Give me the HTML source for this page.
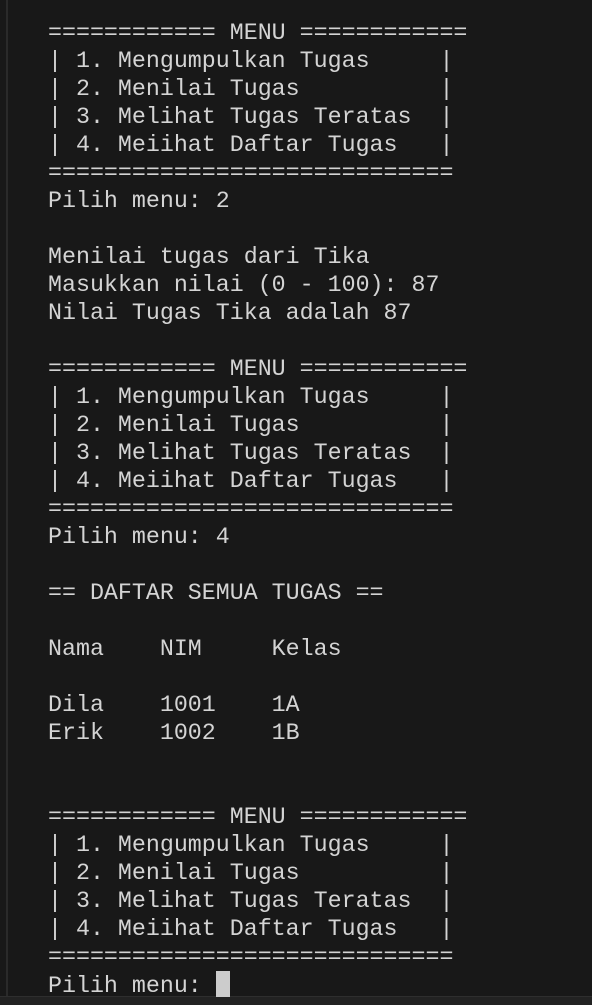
<!DOCTYPE html>
<html><head><meta charset="utf-8"><style>
html,body{margin:0;padding:0;background:#181818;width:592px;height:1004px;overflow:hidden;}
.bl{position:absolute;left:6px;top:0;width:2px;height:997px;background:#2a2a2a;}
.bb{position:absolute;left:0;top:996px;width:592px;height:8px;background:#222;border-top:1px solid #2e2e2e;}
pre{position:absolute;left:48px;top:19px;margin:0;font-family:"Liberation Mono","DejaVu Sans Mono",monospace;font-size:23.3px;line-height:28px;color:#d4d4d4;}
.cur{display:inline-block;width:14px;height:26px;background:#cccccc;vertical-align:-5px;}
</style></head><body>
<div class="bl"></div><div class="bb"></div>
<pre>============ MENU ============
| 1. Mengumpulkan Tugas     |
| 2. Menilai Tugas          |
| 3. Melihat Tugas Teratas  |
| 4. Meiihat Daftar Tugas   |
=============================
Pilih menu: 2

Menilai tugas dari Tika
Masukkan nilai (0 - 100): 87
Nilai Tugas Tika adalah 87

============ MENU ============
| 1. Mengumpulkan Tugas     |
| 2. Menilai Tugas          |
| 3. Melihat Tugas Teratas  |
| 4. Meiihat Daftar Tugas   |
=============================
Pilih menu: 4

== DAFTAR SEMUA TUGAS ==

Nama    NIM     Kelas

Dila    1001    1A
Erik    1002    1B


============ MENU ============
| 1. Mengumpulkan Tugas     |
| 2. Menilai Tugas          |
| 3. Melihat Tugas Teratas  |
| 4. Meiihat Daftar Tugas   |
=============================
Pilih menu: <span class="cur"></span></pre>
</body></html>
